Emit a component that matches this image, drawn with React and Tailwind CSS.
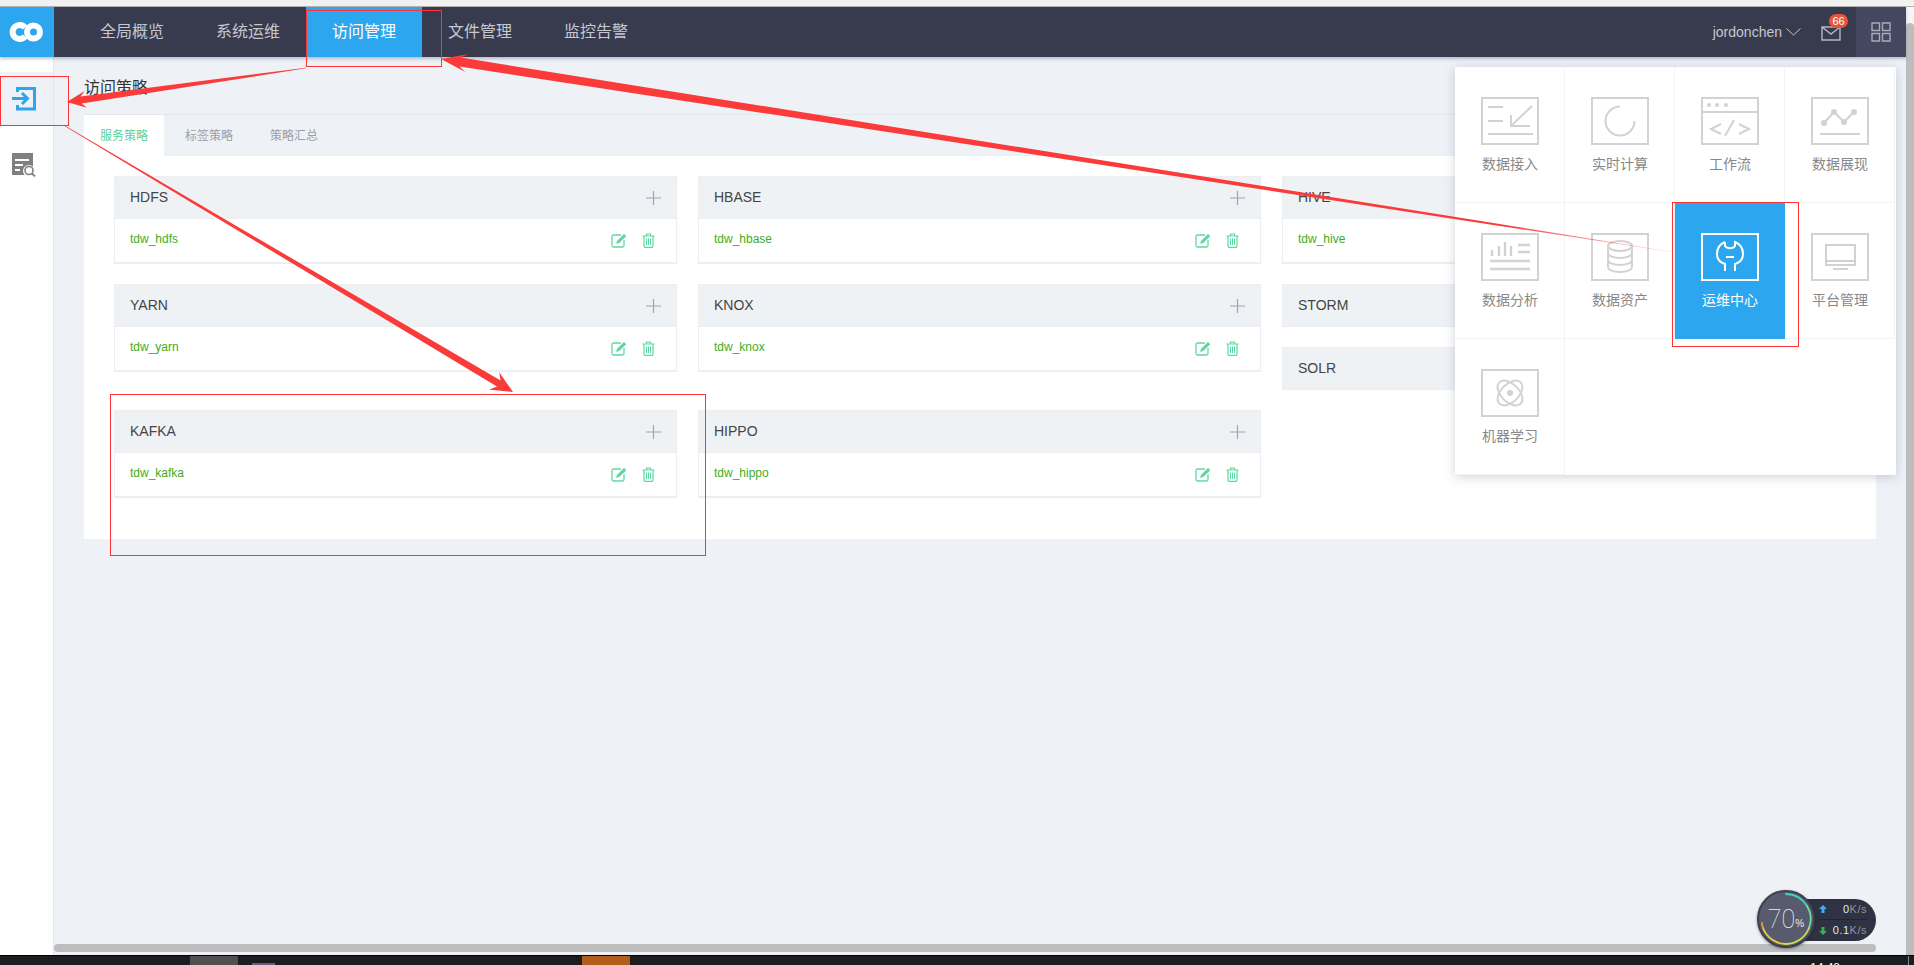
import React from "react";

const navItems = ["全局概览", "系统运维", "访问管理", "文件管理", "监控告警"];

// tapered annotation arrow, drawn thin at the tail and thick near the head
const arrowPoints = (x1, y1, x2, y2, tail, shaft, headLen, headW) => {
  const len = Math.hypot(x2 - x1, y2 - y1);
  const ux = (x2 - x1) / len;
  const uy = (y2 - y1) / len;
  const nx = -uy;
  const ny = ux;
  const bx = x2 - ux * headLen;
  const by = y2 - uy * headLen;
  const ix = x2 - ux * headLen * 0.75;
  const iy = y2 - uy * headLen * 0.75;
  const pts = [
    [x1 + (nx * tail) / 2, y1 + (ny * tail) / 2],
    [ix + (nx * shaft) / 2, iy + (ny * shaft) / 2],
    [bx + (nx * headW) / 2, by + (ny * headW) / 2],
    [x2, y2],
    [bx - (nx * headW) / 2, by - (ny * headW) / 2],
    [ix - (nx * shaft) / 2, iy - (ny * shaft) / 2],
    [x1 - (nx * tail) / 2, y1 - (ny * tail) / 2],
  ];
  return pts.map((p) => p.map((v) => v.toFixed(1)).join(",")).join(" ");
};

const Frame = ({ children, active }) => (
  <svg width="58" height="48" viewBox="0 0 58 48" fill="none" stroke={active ? "#ffffff" : "#d2d2d2"} strokeWidth="2">
    <rect x="1" y="1" width="56" height="46" strokeWidth="2" />
    {children}
  </svg>
);

const panelItems = [
  {
    label: "数据接入",
    icon: <path d="M7 10H22M7 24H22M51 9L30 29M30 18V29H49M7 37H52" />,
  },
  {
    label: "实时计算",
    icon: <path d="M43.5 24A14.5 14.5 0 1 1 29 9.5" />,
  },
  {
    label: "工作流",
    icon: (
      <>
        <path d="M1 15H57M20 27L10 32L20 37M33 23L24 39M38 27L48 32L38 37" />
        <circle cx="8" cy="8" r="2" fill="#d2d2d2" stroke="none" />
        <circle cx="16" cy="8" r="2" fill="#d2d2d2" stroke="none" />
        <circle cx="25" cy="8" r="2" fill="#d2d2d2" stroke="none" />
      </>
    ),
  },
  {
    label: "数据展现",
    icon: (
      <>
        <path d="M13 26L23 15L33 25L43 15M9 37H49" />
        <circle cx="13" cy="26" r="3" fill="#d2d2d2" stroke="none" />
        <circle cx="23" cy="15" r="3" fill="#d2d2d2" stroke="none" />
        <circle cx="33" cy="25" r="3" fill="#d2d2d2" stroke="none" />
        <circle cx="43" cy="15" r="3" fill="#d2d2d2" stroke="none" />
      </>
    ),
  },
  {
    label: "数据分析",
    icon: (
      <path d="M11 23V17M18 23V13M24 23V9M30 23V13M37 12H49M37 19H49M9 28H49M9 36H49" strokeWidth="2.4" />
    ),
  },
  {
    label: "数据资产",
    icon: (
      <>
        <ellipse cx="29" cy="13" rx="12" ry="5" />
        <path d="M17 13V34C17 37 23 39 29 39C35 39 41 37 41 34V13M17 20C17 23 23 25 29 25C35 25 41 23 41 20M17 27C17 30 23 32 29 32C35 32 41 30 41 27" />
      </>
    ),
  },
  {
    label: "运维中心",
    active: true,
    icon: (
      <path d="M24 9C19 11 16 15 16 21C16 27 19 29 24 31V38M34 38V31C39 29 42 27 42 21C42 15 39 11 34 9V13C32 16 26 16 24 13V9M25 24H33" />
    ),
  },
  {
    label: "平台管理",
    icon: <path d="M15 12H44V32H15ZM15 28H44M22 36H37" />,
  },
  {
    label: "机器学习",
    icon: (
      <>
        <ellipse cx="29" cy="24" rx="15" ry="9" transform="rotate(45 29 24)" />
        <ellipse cx="29" cy="24" rx="15" ry="9" transform="rotate(-45 29 24)" />
        <circle cx="29" cy="24" r="3" fill="#d2d2d2" stroke="none" />
      </>
    ),
  },
];

const EditIcon = () => (
  <svg width="16" height="15" viewBox="0 0 16 15" fill="none" stroke="#5fd6a1" strokeWidth="1.3">
    <path d="M10 2H2.5C1.6 2 1 2.6 1 3.5V12.5C1 13.4 1.6 14 2.5 14H11.5C12.4 14 13 13.4 13 12.5V7" />
    <path d="M5.5 10.5L6.3 8L13 1.2L15 3.2L8.2 9.8Z" fill="#5fd6a1" strokeWidth="0.6" />
  </svg>
);

const TrashIcon = () => (
  <svg width="13" height="15" viewBox="0 0 13 15" fill="none" stroke="#5fd6a1" strokeWidth="1.2">
    <path d="M0.5 3H12.5M4.5 3V1H8.5V3M2 3V13C2 13.8 2.5 14.4 3.2 14.4H9.8C10.5 14.4 11 13.8 11 13V3" />
    <path d="M4.5 5.5V12M6.5 5.5V12M8.5 5.5V12" strokeWidth="1" />
  </svg>
);

const PlusIcon = () => (
  <svg width="15" height="14" viewBox="0 0 15 14" stroke="#a0a4b2" strokeWidth="1.2">
    <path d="M7.5 0V14M0 7H15" />
  </svg>
);

const ServiceHead = ({ name }) => (
  <div className="h-[43px] bg-[#eff2f5] border border-[#eceef1] px-[15px] flex items-center justify-between text-[14px] text-[#444]">
    <span>{name}</span>
    <span className="flex"><PlusIcon /></span>
  </div>
);

const ServiceBlock = ({ name, item }) => (
  <div>
    <ServiceHead name={name} />
    <div className="h-[45px] bg-white border border-t-0 border-[#eceef1] border-b-2 pl-[15px] pr-[21px] flex items-center justify-between">
      <span className="text-[12px] text-[#3fad1c] mb-[3px]">{item}</span>
      <span className="flex items-center gap-[15px]">
        <EditIcon />
        <TrashIcon />
      </span>
    </div>
  </div>
);

const Logo = () => (
  <svg className="mr-[2px]" width="36" height="20" viewBox="0 0 36 20" fill="none" stroke="#ffffff" strokeWidth="6">
    <path d="M17 5.5A7 7 0 1 0 17 14.5" />
    <circle cx="25.5" cy="10" r="6.5" />
  </svg>
);

export default function App() {
  return (
    <div className="relative w-[1914px] h-[965px] overflow-hidden flex flex-col bg-white [font-family:'Liberation_Sans','Noto_Sans_CJK_SC',sans-serif]">
      <div className="h-[7px] bg-[#f1f1f1] border-b border-[#b4b4b4]" />

      <div className="flex-1 flex min-h-0">
        <div className="flex-1 flex flex-col min-w-0">
          {/* Top nav */}
          <header className="h-[50px] bg-[#383a4e] flex items-center shrink-0 shadow-[0_2px_3px_rgba(120,125,150,0.45)] relative z-10">
            <div className="w-[54px] h-full bg-[#2ca6ee] flex items-center justify-center">
              <Logo />
            </div>
            <nav className="flex ml-[20px] h-full">
              {navItems.map((item) => (
                <div
                  key={item}
                  className={
                    item === "访问管理"
                      ? "w-[116px] flex items-center justify-center text-[16px] bg-[#2ca6ee] text-white"
                      : "w-[116px] flex items-center justify-center text-[16px] text-[#c6c8d0]"
                  }
                >
                  {item}
                </div>
              ))}
            </nav>
            <div className="ml-auto flex items-center h-full">
              <span className="text-[14px] text-[#c6c8d0]">jordonchen</span>
              <svg className="ml-[4px]" width="15" height="8" viewBox="0 0 15 8" fill="none" stroke="#c6c8d0" strokeWidth="1">
                <path d="M0.5 0.5L7.5 7L14.5 0.5" />
              </svg>
              <div className="relative ml-[20px] mr-[15px] mt-[3px]">
                <svg className="block" width="20" height="15" viewBox="0 0 20 15" fill="none" stroke="#b5b7c2" strokeWidth="1.4">
                  <path d="M1 1H19V14H1ZM1 1L10 8L19 1" />
                </svg>
                <span className="absolute top-[-12px] left-[8px] h-[14px] w-[19px] rounded-full bg-[#e8533a] text-white text-[11px] leading-[14px] text-center">
                  66
                </span>
              </div>
              <div className="w-[50px] h-full bg-[#454760] flex items-center justify-center">
                <svg width="20" height="20" viewBox="0 0 20 20" fill="none" stroke="#a9abb8" strokeWidth="1.4">
                  <path d="M1 1H8.5V8.5H1ZM11.5 1H19V8.5H11.5ZM1 11.5H8.5V19H1ZM11.5 11.5H19V19H11.5Z" />
                </svg>
              </div>
            </div>
          </header>

          <div className="flex-1 flex min-h-0">
            {/* Sidebar */}
            <aside className="w-[54px] bg-white pt-[15px] shrink-0 border-r border-[#e3e6ec]">
              <div className="h-[53px] bg-[#eef1f6] flex items-center pl-[12px]">
                <svg width="24" height="24" viewBox="0 0 24 24" fill="none" stroke="#2ca6ee" strokeWidth="3">
                  <path d="M5.5 5V1.5H22.5V22H5.5V18M0 11.5H15M10 6L15.5 11.5L10 17" />
                </svg>
              </div>
              <div className="h-[80px] flex items-center pl-[12px]">
                <svg width="24" height="24" viewBox="0 0 24 24">
                  <path d="M0 0H21V22H0Z" fill="#808080" />
                  <path d="M3 7H17M3 12H11M3 17H8" stroke="#fff" strokeWidth="2" />
                  <circle cx="17" cy="18" r="6" fill="#fff" />
                  <circle cx="17" cy="17.5" r="4" fill="#fff" stroke="#808080" strokeWidth="1.6" />
                  <path d="M20 20.5L23 23.5" stroke="#808080" strokeWidth="1.8" />
                </svg>
              </div>
            </aside>

            {/* Main */}
            <main className="flex-1 min-w-0 flex flex-col bg-[#eef1f6]">
              <div className="flex-1 min-h-0 px-[30px]">
                <div className="h-[57px] pt-[19px] text-[16px] leading-[24px] text-[#333]">访问策略</div>
                <div className="border-t border-[#e4e7ec]">
                  <div className="h-[41px] flex text-[12px] text-[#9a9ea8]">
                    <div className="w-[80px] bg-white text-[#5ad197] flex items-center justify-center">服务策略</div>
                    <div className="w-[80px] ml-[5px] flex items-center justify-center">标签策略</div>
                    <div className="w-[80px] ml-[5px] flex items-center justify-center">策略汇总</div>
                  </div>
                  <div className="bg-white pt-[20px] pl-[30px] pr-[31px] pb-[41px]">
                    <div className="grid grid-cols-[repeat(3,563px)] gap-x-[21px] gap-y-[20px] items-start">
                      <ServiceBlock name="HDFS" item="tdw_hdfs" />
                      <ServiceBlock name="HBASE" item="tdw_hbase" />
                      <ServiceBlock name="HIVE" item="tdw_hive" />
                      <ServiceBlock name="YARN" item="tdw_yarn" />
                      <ServiceBlock name="KNOX" item="tdw_knox" />
                      <div className="flex flex-col gap-[20px]">
                        <ServiceHead name="STORM" />
                        <ServiceHead name="SOLR" />
                      </div>
                      <ServiceBlock name="KAFKA" item="tdw_kafka" />
                      <ServiceBlock name="HIPPO" item="tdw_hippo" />
                    </div>
                  </div>
                </div>
              </div>
              {/* horizontal scrollbar */}
              <div className="h-[11px] shrink-0 pr-[30px]">
                <div className="h-[8px] bg-[#bdbdbd] rounded-[4px]" />
              </div>
            </main>
          </div>
        </div>

        {/* vertical scrollbar */}
        <div className="w-[8px] bg-[#f6f6f6] pt-[16px] shrink-0 flex">
          <div className="w-full bg-[#bdbdbd] rounded-t-[4px]" />
        </div>
      </div>

      {/* Windows taskbar strip */}
      <div className="h-[10px] shrink-0 bg-[#1c1d20] border-t border-black flex overflow-hidden relative">
        <div className="w-[48px] ml-[190px] bg-[#505052]" />
        <div className="w-[23px] h-[2px] ml-[14px] mt-[7px] bg-[#6b5a7a]" />
        <div className="w-[48px] ml-[307px] bg-[#b25d1e]" />
        <span className="ml-[1180px] mt-[5px] text-[12px] leading-[14px] text-white">14:48</span>
        <div className="ml-[68px] w-px bg-[#8a8a8a]" />
      </div>

      {/* Product dropdown */}
      <div className="absolute left-[1455px] top-[67px] w-[441px] h-[408px] bg-white shadow-[0_2px_10px_rgba(120,130,150,0.35)] grid grid-cols-[repeat(4,110px)] auto-rows-[136px] z-20">
        {panelItems.map((p) => (
          <div
            key={p.label}
            className={
              p.active
                ? "bg-[#2ca6ee] flex flex-col items-center pt-[30px]"
                : "border-r border-b border-[#f2f3f5] flex flex-col items-center pt-[30px] pl-px"
            }
          >
            <Frame active={p.active}>{p.icon}</Frame>
            <span className={p.active ? "mt-[9px] text-[14px] leading-[20px] text-white" : "mt-[9px] text-[14px] leading-[20px] text-[#888]"}>
              {p.label}
            </span>
          </div>
        ))}
      </div>

      {/* Speed widget */}
      <div className="absolute left-[1757px] top-[890px] z-30 flex items-center">
        <div className="absolute left-[28px] w-[91px] h-[42px] top-[9px] rounded-r-[21px] bg-[#2f3242] flex flex-col pl-[34px] pr-[9px] text-[11px] text-[#8f93a1] tracking-[0.5px]">
          <div className="h-[21px] flex items-center justify-between border-b border-[#22242f]">
            <svg width="8" height="8" viewBox="0 0 8 8"><path d="M4 0L8 4H5.5V8H2.5V4H0Z" fill="#3fa9f5" /></svg>
            <span><span className="text-[#dfe9f5]">0</span>K/s</span>
          </div>
          <div className="h-[21px] flex items-center justify-between">
            <svg width="8" height="8" viewBox="0 0 8 8"><path d="M4 8L8 4H5.5V0H2.5V4H0Z" fill="#37b24d" /></svg>
            <span><span className="text-[#dfe9f5]">0.1</span>K/s</span>
          </div>
        </div>
        <div className="relative w-[58px] h-[58px] rounded-full bg-[#585b6c] border-2 border-[#3d4050] flex items-center justify-center shadow-[0_1px_3px_rgba(0,0,0,0.4)]">
          <svg className="absolute left-[-2px] top-[-2px]" width="58" height="58" viewBox="0 0 58 58" fill="none" strokeWidth="1.8" strokeLinecap="round">
            <path d="M29 4A25 25 0 0 1 50 16" stroke="#3fd6c4" />
            <path d="M50 16A25 25 0 0 1 52 38" stroke="#6fdc9a" />
            <path d="M52 38A25 25 0 0 1 29 54" stroke="#c9dc5a" />
            <path d="M29 54A25 25 0 0 1 6 38" stroke="#e8cf3f" />
            <path d="M6 38A25 25 0 0 1 5 33" stroke="#e89a3f" />
          </svg>
          <span className="text-[25px] leading-none text-[#eceef3] font-thin [font-family:Roboto,sans-serif]">70</span>
          <span className="text-[10px] text-[#eceef3] mt-[9px]">%</span>
        </div>
      </div>

      {/* Annotation boxes */}
      <div className="absolute left-[306px] top-[10px] w-[136px] h-[57px] border border-[#f33] z-40" />
      <div className="absolute left-0 top-[76px] w-[69px] h-[50px] border border-[#f33] z-40" />
      <div className="absolute left-[110px] top-[394px] w-[596px] h-[162px] border border-[#f33] z-40" />
      <div className="absolute left-[1672px] top-[202px] w-[127px] h-[145px] border border-[#f33] z-40" />

      {/* Annotation arrows */}
      <svg className="absolute inset-0 z-40 pointer-events-none" width="1914" height="965" viewBox="0 0 1914 965">
        <defs>
          <linearGradient id="fadeA" gradientUnits="userSpaceOnUse" x1="1672" y1="252" x2="1500" y2="225">
            <stop offset="0" stopColor="#fb3a3a" stopOpacity="0.15" />
            <stop offset="1" stopColor="#fb3a3a" />
          </linearGradient>
        </defs>
        <polygon points={arrowPoints(1672, 252, 441, 59, 0.6, 9, 26, 18)} fill="url(#fadeA)" />
        <polygon points={arrowPoints(306, 68, 67, 102, 0.6, 7, 19, 17)} fill="#fb3a3a" />
        <polygon points={arrowPoints(65, 126, 513, 392, 0.8, 7, 22, 20)} fill="#fb3a3a" />
      </svg>
    </div>
  );
}
